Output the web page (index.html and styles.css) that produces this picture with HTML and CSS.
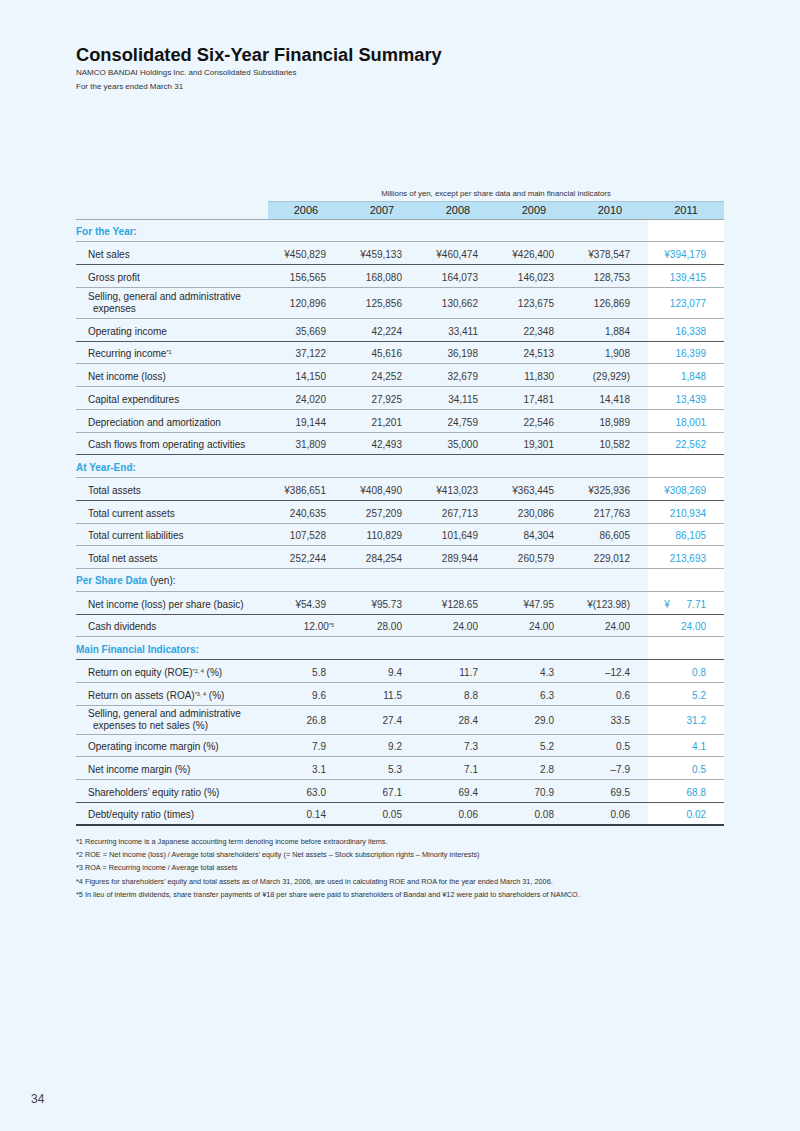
FILE: index.html
```html
<!DOCTYPE html>
<html lang="en">
<head>
    <meta charset="utf-8">
    <title>Consolidated Six-Year Financial Summary</title>
    <link rel="stylesheet" href="styles.css">
</head>
<body>
    <div class="page">
        <div class="content">
            <h1>Consolidated Six-Year Financial Summary</h1>
            <p class="sub">NAMCO BANDAI Holdings Inc. and Consolidated Subsidiaries</p>
            <p class="sub">For the years ended March 31</p>

            <table class="summary">
                <colgroup>
                    <col class="col-label">
                    <col class="col-year"><col class="col-year"><col class="col-year">
                    <col class="col-year"><col class="col-year"><col class="col-year">
                </colgroup>
                <thead>
                    <tr class="unit">
                        <td></td>
                        <td colspan="6">Millions of yen, except per share data and main financial indicators</td>
                    </tr>
                    <tr class="years">
                        <td></td>
                        <th>2006</th><th>2007</th><th>2008</th><th>2009</th><th>2010</th><th>2011</th>
                    </tr>
                </thead>
                <tbody>
                    <tr class="section">
                        <td>For the Year:</td><td></td><td></td><td></td><td></td><td></td><td class="cur"></td>
                    </tr>
                    <tr class="dark">
                        <td>Net sales</td><td>¥450,829</td><td>¥459,133</td><td>¥460,474</td><td>¥426,400</td><td>¥378,547</td><td class="cur">¥394,179</td>
                    </tr>
                    <tr>
                        <td>Gross profit</td><td>156,565</td><td>168,080</td><td>164,073</td><td>146,023</td><td>128,753</td><td class="cur">139,415</td>
                    </tr>
                    <tr class="tall">
                        <td><span class="wrap">Selling, general and administrative expenses</span></td><td>120,896</td><td>125,856</td><td>130,662</td><td>123,675</td><td>126,869</td><td class="cur">123,077</td>
                    </tr>
                    <tr class="dark">
                        <td>Operating income</td><td>35,669</td><td>42,224</td><td>33,411</td><td>22,348</td><td>1,884</td><td class="cur">16,338</td>
                    </tr>
                    <tr>
                        <td>Recurring income<sup>*1</sup></td><td>37,122</td><td>45,616</td><td>36,198</td><td>24,513</td><td>1,908</td><td class="cur">16,399</td>
                    </tr>
                    <tr>
                        <td>Net income (loss)</td><td>14,150</td><td>24,252</td><td>32,679</td><td>11,830</td><td>(29,929)</td><td class="cur">1,848</td>
                    </tr>
                    <tr>
                        <td>Capital expenditures</td><td>24,020</td><td>27,925</td><td>34,115</td><td>17,481</td><td>14,418</td><td class="cur">13,439</td>
                    </tr>
                    <tr>
                        <td>Depreciation and amortization</td><td>19,144</td><td>21,201</td><td>24,759</td><td>22,546</td><td>18,989</td><td class="cur">18,001</td>
                    </tr>
                    <tr class="dark">
                        <td>Cash flows from operating activities</td><td>31,809</td><td>42,493</td><td>35,000</td><td>19,301</td><td>10,582</td><td class="cur">22,562</td>
                    </tr>

                    <tr class="section">
                        <td>At Year-End:</td><td></td><td></td><td></td><td></td><td></td><td class="cur"></td>
                    </tr>
                    <tr class="dark">
                        <td>Total assets</td><td>¥386,651</td><td>¥408,490</td><td>¥413,023</td><td>¥363,445</td><td>¥325,936</td><td class="cur">¥308,269</td>
                    </tr>
                    <tr>
                        <td>Total current assets</td><td>240,635</td><td>257,209</td><td>267,713</td><td>230,086</td><td>217,763</td><td class="cur">210,934</td>
                    </tr>
                    <tr>
                        <td>Total current liabilities</td><td>107,528</td><td>110,829</td><td>101,649</td><td>84,304</td><td>86,605</td><td class="cur">86,105</td>
                    </tr>
                    <tr>
                        <td>Total net assets</td><td>252,244</td><td>284,254</td><td>289,944</td><td>260,579</td><td>229,012</td><td class="cur">213,693</td>
                    </tr>

                    <tr class="section">
                        <td>Per Share Data <span class="plain">(yen):</span></td><td></td><td></td><td></td><td></td><td></td><td class="cur"></td>
                    </tr>
                    <tr class="dark">
                        <td>Net income (loss) per share (basic)</td><td>¥54.39</td><td>¥95.73</td><td>¥128.65</td><td>¥47.95</td><td>¥(123.98)</td><td class="cur">¥<span class="pad"></span>7.71</td>
                    </tr>
                    <tr>
                        <td>Cash dividends</td><td>12.00<sup class="hang">*5</sup></td><td>28.00</td><td>24.00</td><td>24.00</td><td>24.00</td><td class="cur">24.00</td>
                    </tr>

                    <tr class="section dark">
                        <td>Main Financial Indicators:</td><td></td><td></td><td></td><td></td><td></td><td class="cur"></td>
                    </tr>
                    <tr>
                        <td>Return on equity (ROE)<sup>*2, 4</sup> (%)</td><td>5.8</td><td>9.4</td><td>11.7</td><td>4.3</td><td>–12.4</td><td class="cur">0.8</td>
                    </tr>
                    <tr>
                        <td>Return on assets (ROA)<sup>*3, 4</sup> (%)</td><td>9.6</td><td>11.5</td><td>8.8</td><td>6.3</td><td>0.6</td><td class="cur">5.2</td>
                    </tr>
                    <tr class="tall short">
                        <td><span class="wrap">Selling, general and administrative expenses to net sales (%)</span></td><td>26.8</td><td>27.4</td><td>28.4</td><td>29.0</td><td>33.5</td><td class="cur">31.2</td>
                    </tr>
                    <tr>
                        <td>Operating income margin (%)</td><td>7.9</td><td>9.2</td><td>7.3</td><td>5.2</td><td>0.5</td><td class="cur">4.1</td>
                    </tr>
                    <tr>
                        <td>Net income margin (%)</td><td>3.1</td><td>5.3</td><td>7.1</td><td>2.8</td><td>–7.9</td><td class="cur">0.5</td>
                    </tr>
                    <tr class="dark">
                        <td>Shareholders’ equity ratio (%)</td><td>63.0</td><td>67.1</td><td>69.4</td><td>70.9</td><td>69.5</td><td class="cur">68.8</td>
                    </tr>
                    <tr class="last">
                        <td>Debt/equity ratio (times)</td><td>0.14</td><td>0.05</td><td>0.06</td><td>0.08</td><td>0.06</td><td class="cur">0.02</td>
                    </tr>
                </tbody>
            </table>

            <div class="notes">
                <p>*1 Recurring income is a Japanese accounting term denoting income before extraordinary items.</p>
                <p>*2 ROE = Net income (loss) / Average total shareholders’ equity (= Net assets – Stock subscription rights – Minority interests)</p>
                <p>*3 ROA = Recurring income / Average total assets</p>
                <p>*4 Figures for shareholders’ equity and total assets as of March 31, 2006, are used in calculating ROE and ROA for the year ended March 31, 2006.</p>
                <p>*5 In lieu of interim dividends, share transfer payments of ¥18 per share were paid to shareholders of Bandai and ¥12 were paid to shareholders of NAMCO.</p>
            </div>
        </div>
        <div class="folio">34</div>
    </div>
</body>
</html>
```

FILE: styles.css
```css
* {
    box-sizing: border-box;
}
body {
    margin: 0;
    background-color: #edf5fd;
    font-family: "Liberation Sans", Arial, sans-serif;
    color: #231f20;
}
.page {
    height: 1131px;
    display: flex;
    flex-direction: column;
    padding-top: 44px;
}
.content {
    padding-left: 76px;
}
h1 {
    margin: 0;
    font-size: 18.3px;
    line-height: 22px;
    font-weight: bold;
    color: #111;
}
.sub {
    margin: 0;
    font-size: 8px;
    line-height: 14px;
    color: #333;
}

/* table */
.summary {
    margin-top: 93px;
    width: 648px;
    border-collapse: collapse;
    table-layout: fixed;
    font-size: 10px;
}
.col-label {
    width: 192px;
}
.col-year {
    width: 76px;
}
.summary td,
.summary th {
    padding: 0;
}
.unit td {
    height: 14px;
    font-size: 7.8px;
    text-align: center;
    color: #333;
    vertical-align: top;
    padding-top: 2px;
}
.years td,
.years th {
    height: 18px;
    border-bottom: 1px solid #9ea6ae;
}
.years th {
    background-color: #b9e1f6;
    border-top: 1px solid #a9c6d8;
    font-size: 11px;
    font-weight: normal;
    color: #222;
}
.summary tbody td {
    height: 22.75px;
    padding: 3px 18px 0 0;
    text-align: right;
    color: #3a3a3a;
    border-bottom: 1px solid #a9afb6;
    vertical-align: middle;
    white-space: nowrap;
}
.summary tbody td:first-child {
    text-align: left;
    padding-left: 12px;
    padding-right: 0;
    color: #2a2a2a;
}
.summary tbody .tall td {
    height: 31px;
    padding-top: 1px;
}
.summary tbody .tall.short td {
    height: 29px;
}
.wrap {
    display: block;
    white-space: normal;
    line-height: 12px;
    padding-left: 5px;
    text-indent: -5px;
    width: 170px;
}
.summary tbody .section td {
    padding-top: 2px;
}
.summary tbody .section td:first-child {
    padding-left: 0;
    color: #2aa7e1;
    font-weight: bold;
}
.plain {
    font-weight: normal;
    color: #2a2a2a;
}
.summary tbody td.cur {
    background-color: #fff;
    color: #2aa7e1;
}
.summary tbody .dark td {
    border-bottom-color: #55595f;
}
.summary tbody .last td {
    border-bottom: 2px solid #3b3e42;
}
sup {
    font-size: 5.5px;
    line-height: 0;
    vertical-align: 3px;
}
.hang {
    margin-right: -8px;
}
.pad {
    display: inline-block;
    width: 16.7px;
}

/* footnotes */
.notes {
    margin-top: 9px;
    font-size: 7.3px;
    line-height: 13.2px;
    color: #333;
}
.notes p {
    margin: 0;
}
.folio {
    margin-top: auto;
    padding: 0 0 25px 31px;
    font-size: 12px;
    line-height: 14px;
    color: #444;
}
```
